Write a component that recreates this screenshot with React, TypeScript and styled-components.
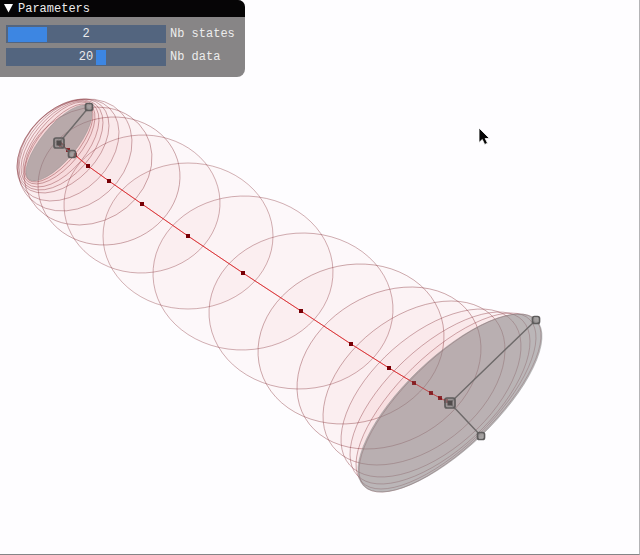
import React, { useState } from "react";
import styled, { createGlobalStyle } from "styled-components";

const GlobalStyle = createGlobalStyle`
  *, *::before, *::after { box-sizing: border-box; }
  body { margin: 0; background: #fefdff; }
`;

const Page = styled.main`
  position: relative;
  min-height: 100vh;
  background: #fefdff;
  border-right: 1px solid #b4b4b6;
  border-bottom: 1px solid #858587;
`;

const Scene = styled.svg`
  display: block;
  width: 100%;
  height: auto;
`;

const Panel = styled.section`
  position: absolute;
  top: 0;
  left: 0;
  width: 245px;
  overflow: hidden;
  border-radius: 0 7px 8px 0;
  background: #878586;
  color: #ececec;
  font: 12px/16px "Liberation Mono", monospace;
`;

const TitleBar = styled.button`
  display: flex;
  align-items: center;
  gap: 5px;
  width: 100%;
  height: 17px;
  padding: 0 4px;
  border: 0;
  background: #060506;
  color: inherit;
  font: inherit;
  text-align: left;
`;

const Controls = styled.div`
  display: grid;
  gap: 5px;
  padding: 8px 6px 11px;
`;

const Row = styled.label`
  display: flex;
  align-items: center;
  gap: 4px;
  height: 18px;
`;

const Track = styled.span`
  display: grid;
  width: 160px;
  height: 18px;
  background: #53657f;
  > * { grid-area: 1 / 1; }
`;

const Range = styled.input<{ $grab: number }>`
  appearance: none;
  width: 100%;
  height: 18px;
  margin: 0;
  padding: 2px;
  background: transparent;
  outline: none;
  &::-webkit-slider-thumb {
    appearance: none;
    width: ${(p) => p.$grab}px;
    height: 15px;
    border: 0;
    border-radius: 0;
    background: #3d86e2;
  }
`;

const Value = styled.output`
  position: relative;
  justify-self: center;
  align-self: center;
  pointer-events: none;
`;

type SliderProps = { label: string; min: number; max: number; initial: number; grab: number };

function Slider({ label, min, max, initial, grab }: SliderProps) {
  const [value, setValue] = useState(initial);
  return (
    <Row>
      <Track>
        <Range
          type="range"
          aria-label={label}
          min={min}
          max={max}
          value={value}
          $grab={grab}
          onChange={(e) => setValue(Number(e.target.value))}
        />
        <Value>{value}</Value>
      </Track>
      {label}
    </Row>
  );
}

// Centre, half width, half height, and horizontal offset of the topmost point.
type Gaussian = [number, number, number, number, number];

const gaussians: Gaussian[] = [
  [59, 143, 34, 39, 24],
  [59, 143, 36, 41, 23],
  [60, 144, 39, 43, 22],
  [61, 145, 42, 45, 21],
  [63, 146, 46, 47, 20],
  [68, 150, 51, 51, 17],
  [75, 155, 57, 56, 13],
  [88, 166, 64, 59, 9],
  [109, 181, 71, 64, 5],
  [142, 204, 78, 69, 1],
  [188, 236, 85, 73, 0],
  [243, 273, 90, 77, 1],
  [301, 311, 92, 78, 2],
  [351, 344, 93, 80, 9],
  [389, 368, 92, 81, 22],
  [414, 383, 91, 82, 37],
  [431, 393, 90, 84, 50],
  [440, 398, 90, 86, 59],
  [446, 401, 90, 88, 65],
  [450, 403, 91, 89, 69],
];

const start: Gaussian = [59, 143, 33, 38, 25];
const end: Gaussian = [450, 403, 92, 89, 69];

function ellipse([cx, cy, w, h, shift]: Gaussian) {
  const xx = w * w;
  const yy = h * h;
  const xy = -shift * h;
  const mean = (xx + yy) / 2;
  const spread = Math.hypot((xx - yy) / 2, xy);
  const angle = (Math.atan2(2 * xy, xx - yy) * 90) / Math.PI;
  return {
    cx,
    cy,
    rx: Math.sqrt(mean + spread),
    ry: Math.sqrt(mean - spread),
    transform: `rotate(${angle} ${cx} ${cy})`,
  };
}

function Handle({ x, y, r }: { x: number; y: number; r: number }) {
  return (
    <g>
      <rect x={x - r} y={y - r} width={2 * r} height={2 * r} rx="2" fill="#8a8787" fillOpacity=".65" stroke="#5e5c5c" strokeWidth="1.7" />
      <rect x={x - r / 2} y={y - r / 2} width={r} height={r} fill={r > 4 ? "#514c4c" : "#a39f9f"} />
    </g>
  );
}

const path = gaussians.map(([x, y]) => `${x},${y}`).join(" ");

export default function App() {
  return (
    <>
      <GlobalStyle />
      <Page>
        <Scene viewBox="0 0 639 554" role="img" aria-label="Gaussian trajectory">
          {gaussians.map((g, i) => (
            <ellipse key={i} {...ellipse(g)} fill="#e03434" fillOpacity=".025" />
          ))}
          {gaussians.map((g, i) => (
            <ellipse key={i} {...ellipse(g)} fill="none" stroke="#8a383e" strokeOpacity=".65" strokeWidth=".6" />
          ))}
          <polyline points={path} fill="none" stroke="#d92c30" strokeWidth=".9" />
          {[start, end].map((g, i) => (
            <ellipse key={i} {...ellipse(g)} fill="#888687" fillOpacity=".56" stroke="#888" strokeWidth=".4" />
          ))}
          <polyline points={path} fill="none" stroke="#d92c30" strokeOpacity=".5" strokeWidth=".8" />
          {gaussians.map(([x, y], i) => (
            <rect key={i} x={x - 2} y={y - 2} width="4" height="4" fill="#780006" fillOpacity={x < 80 || x > 400 ? 0.75 : 1} />
          ))}
          <path d="M89 107 59 143 72 154M536 320 450 403 481 436" fill="none" stroke="#6e6a6a" strokeWidth="1.4" />
          <Handle x={59} y={143} r={5} />
          <Handle x={89} y={107} r={3.5} />
          <Handle x={72} y={154} r={3.5} />
          <Handle x={450} y={403} r={5} />
          <Handle x={536} y={320} r={3.5} />
          <Handle x={481} y={436} r={3.5} />
          <path d="M479 128v14.500l3.300-3 2.400 5 2.800-1.300-2.300-4.700h4.300Z" fill="#050505" stroke="#fff" strokeWidth=".8" />
        </Scene>
        <Panel aria-label="Parameters">
          <TitleBar type="button">
            <svg width="9" height="9" viewBox="0 0 9 9" aria-hidden="true">
              <path d="M0 0h9L4.500 8.500Z" fill="#fff" />
            </svg>
            Parameters
          </TitleBar>
          <Controls>
            <Slider label="Nb states" min={2} max={5} initial={2} grab={39} />
            <Slider label="Nb data" min={5} max={30} initial={20} grab={10} />
          </Controls>
        </Panel>
      </Page>
    </>
  );
}
